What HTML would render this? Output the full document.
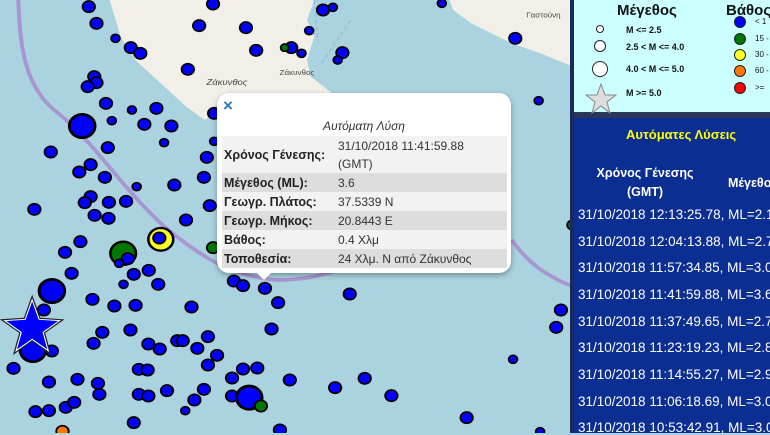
<!DOCTYPE html>
<html><head><meta charset="utf-8"><style>
*{margin:0;padding:0;box-sizing:border-box}
body{width:770px;height:433px;overflow:hidden;position:relative;font-family:"Liberation Sans",sans-serif;background:#aad3df}
#map{position:absolute;left:0;top:0;width:573px;height:433px}
#right{position:absolute;left:570px;top:0;width:200px;height:433px;background:#0b2e93;border-left:4px solid #1a2a5a}
#leg{position:absolute;left:0;top:0;width:196px;height:118px;background:#ccffff;border-bottom:6px solid #2a3558}
.lt{position:absolute;font-weight:bold;font-size:9px;color:#111}
.ch{position:absolute;font-weight:bold;font-size:15px;color:#111}
.dd{position:absolute;width:12px;height:12px;border-radius:50%;border:1px solid #222}
.row{position:absolute;left:4px;color:#fff;font-size:13.5px;white-space:nowrap}
#pop{position:absolute;left:217px;top:93px;width:294px;height:180px;background:#fff;border-radius:12px;box-shadow:0 2px 6px rgba(0,0,0,.35)}
#pop table{position:absolute;left:5px;top:43px;width:285px;border-collapse:collapse;font-size:12px;color:#333}
#pop td{padding:0 2px;height:19px;vertical-align:middle}
#pop td.l{font-weight:bold;color:#222;width:114px;font-size:12.5px}
</style></head><body>
<svg id="map" viewBox="0 0 1568 1299" preserveAspectRatio="none">
<rect width="1568" height="1299" fill="#aad3df"/>
<path d="M300 0 L520 0 L560 0 L860 0 L840 60 L860 110 L840 180 L850 230 L910 280 L760 300 L640 320 L590 340 L560 360 L510 320 L470 280 L420 230 L370 180 L330 110 Z" fill="#f2efe9"/>
<path d="M1230 0 L1568 0 L1568 200 L1480 160 L1400 130 L1290 70 L1240 30 Z" fill="#f2efe9"/>
<path d="M50 0 C55 120 60 260 160 340 C260 430 330 560 450 680 C560 780 640 830 760 840 C860 840 920 810 960 800" fill="none" stroke="#a896d2" stroke-width="11"/>
<path d="M1400 720 C1440 780 1480 820 1568 860" fill="none" stroke="#a896d2" stroke-width="11"/>
<path d="M860 0 L870 120 M880 190 L960 60" stroke="#8ab4e0" stroke-width="3" stroke-dasharray="12 8" fill="none"/>
<text x="565" y="255" font-size="26" font-style="italic" fill="#444" font-family="Liberation Sans">Ζάκυνθος</text>
<text x="765" y="225" font-size="22" fill="#444" font-family="Liberation Sans">Ζάκυνθος</text>
<text x="1440" y="52" font-size="22" fill="#444" font-family="Liberation Sans">Γαστούνη</text>
<g stroke="#000" stroke-width="5" fill="#0000ff">
<circle cx="243" cy="20" r="17"/><circle cx="264" cy="70" r="17"/><circle cx="316" cy="115" r="12"/><circle cx="358" cy="143" r="17"/><circle cx="384" cy="160" r="17"/><circle cx="545" cy="77" r="17"/><circle cx="583" cy="12" r="17"/><circle cx="673" cy="83" r="17"/><circle cx="701" cy="151" r="17"/><circle cx="797" cy="143" r="17"/><circle cx="825" cy="160" r="12"/><circle cx="846" cy="92" r="12"/><circle cx="884" cy="30" r="17"/><circle cx="911" cy="22" r="12"/><circle cx="937" cy="158" r="17"/><circle cx="924" cy="180" r="12"/><circle cx="1209" cy="10" r="12"/><circle cx="1410" cy="115" r="17"/><circle cx="1474" cy="302" r="12"/><circle cx="514" cy="208" r="17"/><circle cx="258" cy="230" r="17"/><circle cx="264" cy="248" r="17"/><circle cx="240" cy="260" r="17"/><circle cx="290" cy="310" r="17"/><circle cx="361" cy="330" r="12"/><circle cx="428" cy="325" r="17"/><circle cx="395" cy="373" r="17"/><circle cx="306" cy="362" r="12"/><circle cx="469" cy="378" r="17"/><circle cx="225" cy="378" r="35" stroke-width="8"/><circle cx="586" cy="340" r="17"/><circle cx="449" cy="428" r="12"/><circle cx="586" cy="424" r="12"/><circle cx="295" cy="443" r="17"/><circle cx="139" cy="456" r="17"/><circle cx="566" cy="472" r="17"/><circle cx="248" cy="494" r="17"/><circle cx="217" cy="516" r="17"/><circle cx="287" cy="532" r="17"/><circle cx="374" cy="560" r="12"/><circle cx="477" cy="555" r="17"/><circle cx="558" cy="532" r="17"/><circle cx="248" cy="590" r="17"/><circle cx="232" cy="608" r="17"/><circle cx="298" cy="607" r="17"/><circle cx="345" cy="604" r="17"/><circle cx="94" cy="628" r="17"/><circle cx="259" cy="646" r="17"/><circle cx="297" cy="655" r="17"/><circle cx="509" cy="660" r="17"/><circle cx="574" cy="617" r="17"/><circle cx="220" cy="725" r="17"/><circle cx="178" cy="757" r="17"/><circle cx="196" cy="820" r="17"/><circle cx="366" cy="823" r="17"/><circle cx="407" cy="811" r="17"/><circle cx="338" cy="853" r="12"/><circle cx="433" cy="853" r="17"/><circle cx="142" cy="873" r="35" stroke-width="8"/><circle cx="120" cy="930" r="17"/><circle cx="253" cy="898" r="17"/><circle cx="313" cy="918" r="17"/><circle cx="371" cy="916" r="17"/><circle cx="524" cy="921" r="17"/><circle cx="640" cy="843" r="17"/><circle cx="665" cy="857" r="17"/><circle cx="725" cy="865" r="17"/><circle cx="761" cy="908" r="17"/><circle cx="957" cy="882" r="17"/><circle cx="1535" cy="930" r="17"/><circle cx="1522" cy="982" r="17"/><circle cx="743" cy="987" r="17"/><circle cx="90" cy="1050" r="35" stroke-width="8"/><circle cx="142" cy="1053" r="17"/><circle cx="37" cy="1105" r="17"/><circle cx="280" cy="997" r="17"/><circle cx="256" cy="1030" r="17"/><circle cx="357" cy="990" r="17"/><circle cx="406" cy="1032" r="17"/><circle cx="437" cy="1047" r="17"/><circle cx="485" cy="1022" r="17"/><circle cx="500" cy="1022" r="17"/><circle cx="540" cy="1045" r="17"/><circle cx="569" cy="1010" r="17"/><circle cx="594" cy="1066" r="17"/><circle cx="569" cy="1095" r="17"/><circle cx="380" cy="1108" r="17"/><circle cx="404" cy="1110" r="17"/><circle cx="134" cy="1146" r="17"/><circle cx="212" cy="1138" r="17"/><circle cx="268" cy="1150" r="17"/><circle cx="272" cy="1183" r="17"/><circle cx="380" cy="1183" r="17"/><circle cx="406" cy="1188" r="17"/><circle cx="457" cy="1172" r="17"/><circle cx="558" cy="1168" r="17"/><circle cx="532" cy="1200" r="17"/><circle cx="635" cy="1134" r="17"/><circle cx="665" cy="1107" r="17"/><circle cx="704" cy="1104" r="17"/><circle cx="635" cy="1188" r="17"/><circle cx="682" cy="1193" r="35" stroke-width="8"/><circle cx="793" cy="1140" r="17"/><circle cx="917" cy="1163" r="17"/><circle cx="998" cy="1135" r="17"/><circle cx="1071" cy="1187" r="17"/><circle cx="1404" cy="1078" r="12"/><circle cx="1277" cy="1253" r="17"/><circle cx="97" cy="1235" r="17"/><circle cx="134" cy="1232" r="17"/><circle cx="180" cy="1222" r="17"/><circle cx="203" cy="1207" r="17"/><circle cx="366" cy="1268" r="17"/><circle cx="507" cy="1232" r="12"/><circle cx="766" cy="1290" r="17"/><circle cx="1478" cy="1295" r="12"/>
<circle cx="440" cy="718" r="34" fill="#ffff22" stroke-width="7"/><circle cx="436" cy="714" r="17"/>
<circle cx="337" cy="760" r="35" fill="#007700" stroke-width="7"/><circle cx="350" cy="776" r="17"/><circle cx="326" cy="790" r="12"/>
<circle cx="583" cy="743" r="17" fill="#007700"/><circle cx="779" cy="143" r="11" fill="#007700"/><circle cx="714" cy="1218" r="17" fill="#007700"/><circle cx="1566" cy="675" r="14" fill="#007700"/><circle cx="171" cy="1294" r="17" fill="#ff7700"/>
</g>
<polygon points="88,900 107,958 163,962 118,997 132,1052 88,1018 44,1052 58,997 13,962 69,958" fill="#0000ff" stroke="#222" stroke-width="10" stroke-linejoin="miter"/>
<polygon points="88,900 107,958 163,962 118,997 132,1052 88,1018 44,1052 58,997 13,962 69,958" fill="#0000ff" stroke="#fff" stroke-width="3"/>
</svg>

<div id="pop">
<div style="position:absolute;left:6px;top:3px;color:#2a78c8;font-size:17px;font-weight:bold">×</div>
<div style="position:absolute;left:0;width:294px;top:26px;text-align:center;font-style:italic;font-size:12px;color:#333">Αυτόματη Λύση</div>
<table>
<tr style="background:#f2f2f2"><td class="l" style="height:37px">Χρόνος Γένεσης:</td><td style="line-height:18px">31/10/2018 11:41:59.88<br>(GMT)</td></tr>
<tr style="background:#dddddd"><td class="l">Μέγεθος (ML):</td><td>3.6</td></tr>
<tr style="background:#f2f2f2"><td class="l">Γεωγρ. Πλάτος:</td><td>37.5339 N</td></tr>
<tr style="background:#dddddd"><td class="l">Γεωγρ. Μήκος:</td><td>20.8443 E</td></tr>
<tr style="background:#f2f2f2"><td class="l">Βάθος:</td><td>0.4 Χλμ</td></tr>
<tr style="background:#dddddd"><td class="l">Τοποθεσία:</td><td>24 Χλμ. Ν από Ζάκυνθος</td></tr>
</table>
<div style="position:absolute;left:38px;top:178px;width:0;height:0;border-left:9px solid transparent;border-right:9px solid transparent;border-top:9px solid #fff"></div>
</div>

<div id="right">
<div id="leg">
<div class="ch" style="left:43px;top:2px">Μέγεθος</div>
<div class="ch" style="left:152px;top:2px">Βάθος</div>
<div style="position:absolute;left:22px;top:25px;width:8px;height:8px;border-radius:50%;background:#fff;border:1px solid #222"></div>
<div class="lt" style="left:52px;top:25px">M &lt;= 2.5</div>
<div style="position:absolute;left:20px;top:40px;width:12px;height:12px;border-radius:50%;background:#fff;border:1px solid #222"></div>
<div class="lt" style="left:52px;top:42px">2.5 &lt; M &lt;= 4.0</div>
<div style="position:absolute;left:18px;top:61px;width:16px;height:16px;border-radius:50%;background:#fff;border:1.5px solid #222"></div>
<div class="lt" style="left:52px;top:64px">4.0 &lt; M &lt;= 5.0</div>
<svg style="position:absolute;left:10px;top:82px" width="34" height="34" viewBox="0 0 34 34"><polygon points="17,2 21,13 32,13 23,20 26,31 17,24 8,31 11,20 2,13 13,13" fill="#ddd" stroke="#888" stroke-width="1"/></svg>
<div class="lt" style="left:52px;top:88px">M &gt;= 5.0</div>
<div class="dd" style="left:160px;top:16px;background:#0000ff"></div><div class="lt" style="left:181px;top:17px;font-weight:normal;font-size:8px">&lt; 1</div>
<div class="dd" style="left:160px;top:33px;background:#007700"></div><div class="lt" style="left:181px;top:34px;font-weight:normal;font-size:8px">15 -</div>
<div class="dd" style="left:160px;top:49px;background:#ffff22"></div><div class="lt" style="left:181px;top:50px;font-weight:normal;font-size:8px">30 -</div>
<div class="dd" style="left:160px;top:65px;background:#ff7700"></div><div class="lt" style="left:181px;top:66px;font-weight:normal;font-size:8px">60 -</div>
<div class="dd" style="left:160px;top:82px;background:#ff0000"></div><div class="lt" style="left:181px;top:83px;font-weight:normal;font-size:8px">&gt;= </div>
</div>
<div style="position:absolute;left:52px;top:127px;color:#ffff00;font-weight:bold;font-size:13px">Αυτόματες Λύσεις</div>
<div style="position:absolute;left:6px;top:164px;width:130px;text-align:center;color:#fff;font-weight:bold;font-size:12.5px;line-height:19px;white-space:nowrap">Χρόνος Γένεσης<br>(GMT)</div>
<div style="position:absolute;left:154px;top:176px;color:#fff;font-weight:bold;font-size:12.5px;white-space:nowrap">Μέγεθος</div>
<div class="row" style="top:207px">31/10/2018 12:13:25.78, ML=2.1</div>
<div class="row" style="top:234px">31/10/2018 12:04:13.88, ML=2.7</div>
<div class="row" style="top:260px">31/10/2018 11:57:34.85, ML=3.0</div>
<div class="row" style="top:287px">31/10/2018 11:41:59.88, ML=3.6</div>
<div class="row" style="top:314px">31/10/2018 11:37:49.65, ML=2.7</div>
<div class="row" style="top:340px">31/10/2018 11:23:19.23, ML=2.8</div>
<div class="row" style="top:367px">31/10/2018 11:14:55.27, ML=2.9</div>
<div class="row" style="top:394px">31/10/2018 11:06:18.69, ML=3.0</div>
<div class="row" style="top:420px">31/10/2018 10:53:42.91, ML=3.0</div>
</div>
</body></html>
